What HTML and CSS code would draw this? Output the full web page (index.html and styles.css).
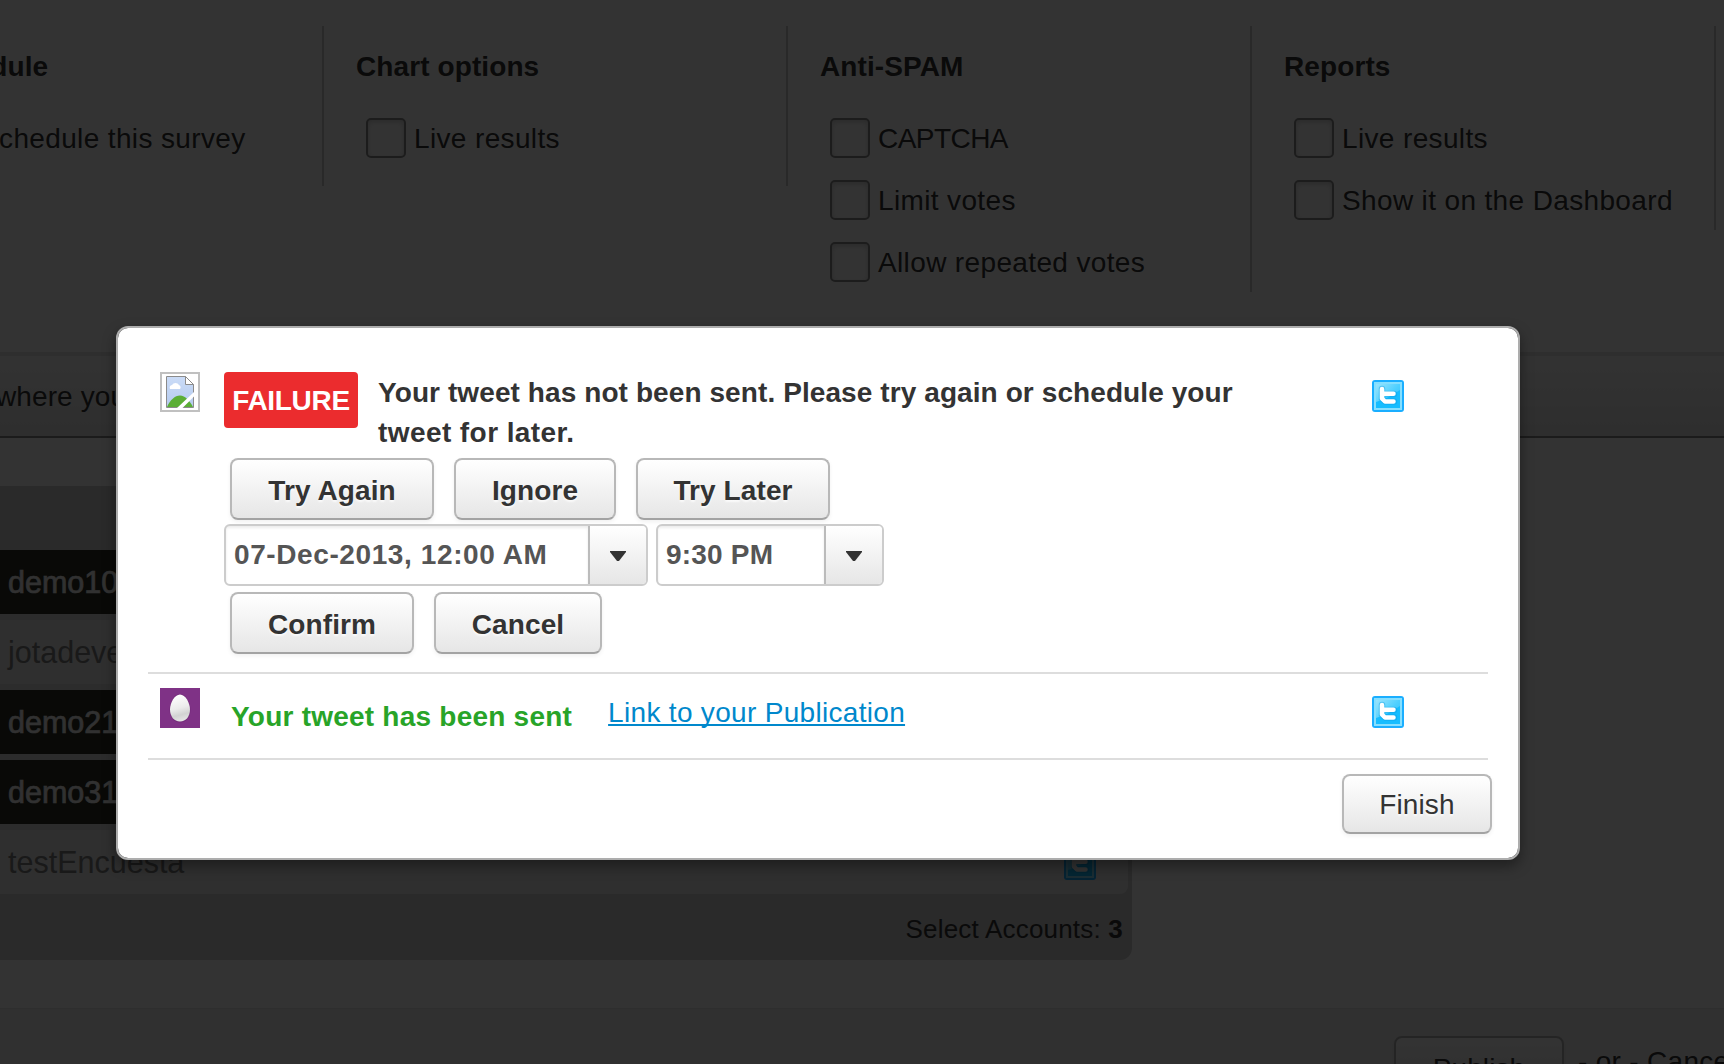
FILE: index.html
```html
<!DOCTYPE html>
<html lang="en">
<head>
<meta charset="utf-8">
<title>Publish survey</title>
<link rel="stylesheet" href="styles.css">
</head>
<body>
<svg class="defs" width="0" height="0" aria-hidden="true">
  <defs>
    <linearGradient id="tw-bg" x1="0" y1="0" x2="1" y2="1">
      <stop offset="0" stop-color="#a5e7fd"/><stop offset=".5" stop-color="#4fd0ff"/><stop offset="1" stop-color="#1cb8ff"/>
    </linearGradient>
    <symbol id="twitter" viewBox="0 0 32 32">
      <rect width="32" height="32" rx="3" fill="#1aaeff"/>
      <rect x="2" y="2" width="28" height="28" fill="url(#tw-bg)"/>
      <path d="M4 22C12 20 20 15 28 10V28H4z" fill="#16bdff"/>
      <rect x="3" y="3" width="26" height="26" fill="none" stroke="#85dfff" stroke-width="2"/>
      <path d="M10 9V18.500L13.500 21.500H22M10 14H22" fill="none" stroke="#0a9be0" stroke-opacity=".4" stroke-width="6.500" stroke-linecap="round"/>
      <path d="M10 9V18.500L13 21.500H21.500M10 13.800H21.500" fill="none" stroke="#fff" stroke-width="4.500" stroke-linecap="round" stroke-linejoin="round"/>
    </symbol>
  </defs>
</svg>
<main class="page">
  <section class="options">
    <div class="option-group">
      <h2 class="group-title group-title-cut">Schedule</h2>
      <div class="check-row check-row-cut">Schedule this survey</div>
    </div>
    <div class="option-group">
      <h2 class="group-title">Chart options</h2>
      <div class="check-row"><span class="check"></span>Live results</div>
    </div>
    <div class="option-group">
      <h2 class="group-title">Anti-SPAM</h2>
      <div class="check-row"><span class="check"></span><span class="tight">CAPTCHA</span></div>
      <div class="check-row"><span class="check"></span>Limit votes</div>
      <div class="check-row"><span class="check"></span>Allow repeated votes</div>
    </div>
    <div class="option-group">
      <h2 class="group-title">Reports</h2>
      <div class="check-row"><span class="check"></span>Live results</div>
      <div class="check-row"><span class="check"></span>Show it on the Dashboard</div>
    </div>
  </section>
  <div class="section-bar"><span class="section-text">where you want</span></div>
  <section class="accounts">
    <div class="account-list">
      <div class="account selected">demo10</div>
      <div class="account">jotadeveloper</div>
      <div class="account selected">demo21</div>
      <div class="account selected">demo31</div>
      <div class="account">testEncuesta<svg class="tw"><use href="#twitter"/></svg></div>
    </div>
    <div class="account-total">Select Accounts:&nbsp;<b>3</b></div>
  </section>
  <footer class="page-footer">
    <span class="btn btn-publish">Publish</span>
    <span class="or-cancel">- or - Cancel</span>
  </footer>
</main>
<div class="overlay">
  <div class="modal">
    <div class="result">
      <svg class="avatar" viewBox="0 0 40 40">
        <rect x="1" y="1" width="38" height="38" fill="#fff" stroke="#c0c0c0" stroke-width="2"/>
        <linearGradient id="sky" x1="0" y1="0" x2="0" y2="1"><stop offset="0" stop-color="#cbdcf7"/><stop offset="1" stop-color="#b4caee"/></linearGradient>
        <path d="M6.500 4.500H25.500L33.500 12.500V35.500H6.500z" fill="url(#sky)"/>
        <path d="M7 35C10 28 15 23.500 20 23.500S30 29 33 35z" fill="#5bae35"/>
        <path d="M10 17a3 3 0 0 1 2-4a4 4 0 0 1 7 0a2.500 2.500 0 0 1 1 4z" fill="#fff"/>
        <path d="M6.500 4.500H25.500L33.500 12.500V35.500H6.500z" fill="none" stroke="#8b8b8b"/>
        <path d="M25.500 4.500V12.500H33.500z" fill="#fff" stroke="#8b8b8b"/>
        <path d="M17 36L34.500 19.500V24L22.500 36z" fill="#fff"/>
      </svg>
      <div class="result-body">
        <div class="message-line">
          <span class="failure">FAILURE</span>
          <p class="message">Your tweet has not been sent. Please try again or schedule your<br><span class="loose">tweet for later.</span></p>
        </div>
        <div class="buttons">
          <span class="btn b-again">Try Again</span><span class="btn b-ignore">Ignore</span><span class="btn b-later">Try Later</span>
        </div>
        <div class="combos">
          <div class="combo combo-date"><span class="combo-text">07-Dec-2013, 12:00 AM</span><span class="combo-arrow"><svg width="16" height="10" viewBox="0 0 16 10"><path d="M0 0H16V1L9 10H7L0 1z" fill="#333"/></svg></span></div>
          <div class="combo combo-time"><span class="combo-text">9:30 PM</span><span class="combo-arrow"><svg width="16" height="10" viewBox="0 0 16 10"><path d="M0 0H16V1L9 10H7L0 1z" fill="#333"/></svg></span></div>
        </div>
        <div class="buttons">
          <span class="btn b-confirm">Confirm</span><span class="btn b-cancel">Cancel</span>
        </div>
      </div>
      <svg class="tw"><use href="#twitter"/></svg>
    </div>
    <div class="result result-ok">
      <svg class="avatar" viewBox="0 0 40 40">
        <defs><linearGradient id="egg" x1=".4" y1="0" x2=".6" y2="1"><stop offset="0" stop-color="#fff"/><stop offset=".5" stop-color="#ebebeb"/><stop offset=".75" stop-color="#d2d2d2"/><stop offset="1" stop-color="#e6e6e6"/></linearGradient></defs>
        <rect width="40" height="40" fill="#7f3286"/>
        <path d="M20 6C26 6 30.500 15 30.500 22C30.500 29 26 34.500 20 34.500S9.500 29 9.500 22C9.500 15 14 6 20 6z" fill="#6a2671" opacity=".6"/>
        <path d="M20 6.500C25.500 6.500 30 15 30 21.500C30 28.500 26 33.500 20 33.500S10 28.500 10 21.500C10 15 14.500 6.500 20 6.500z" fill="url(#egg)"/>
      </svg>
      <span class="sent">Your tweet has been sent</span>
      <a class="link">Link to your Publication</a>
      <svg class="tw"><use href="#twitter"/></svg>
    </div>
    <div class="modal-footer"><span class="btn b-finish">Finish</span></div>
  </div>
</div>
</body>
</html>
```
FILE: styles.css
```css
* { box-sizing: border-box; }

body {
  margin: 0;
  width: 1724px;
  height: 1064px;
  overflow: hidden;
  background: #fff;
  color: #333;
  font: 28px/40px "Liberation Sans", Arial, sans-serif;
  white-space: nowrap;
}

.defs { position: absolute; }

.page {
  height: 1064px;
  display: flex;
  flex-direction: column;
  overflow: hidden;
}

/* Survey options */
.options {
  display: flex;
  align-items: flex-start;
  height: 352px;
  flex: none;
  padding-top: 26px;
  margin-left: -140px;
}

.option-group {
  flex: none;
  width: 464px;
  height: 160px;
  padding: 20px 0 0 32px;
  border-right: 2px solid #ccc;
}
.option-group:nth-child(3) { height: 266px; }
.option-group:nth-child(4) { height: 204px; }

.group-title {
  margin: 0 0 30px;
  font-size: 28px;
  line-height: 42px;
  letter-spacing: .1px;
}
.group-title-cut { margin-left: 31px; }

.check-row {
  display: flex;
  gap: 8px;
  height: 40px;
  margin: 0 0 22px 10px;
  line-height: 42px;
  letter-spacing: .36px;
}
.check-row-cut { margin-left: 88px; }
.tight { letter-spacing: -.55px; }

.check {
  width: 40px;
  height: 40px;
  border: 2px solid #8c8c8c;
  border-radius: 5px;
  box-shadow: inset 0 2px 5px rgba(0, 0, 0, .18);
}

.section-bar {
  flex: none;
  height: 86px;
  padding-top: 21px;
  border-top: 4px solid #e3e3e3;
  border-bottom: 2px solid #858585;
  background: linear-gradient(#fbfbfb, #e4e4e4);
}
.section-text { margin-left: -4px; letter-spacing: .1px; }

/* Accounts */
.accounts {
  flex: none;
  width: 1132px;
  height: 474px;
  margin-top: 48px;
  padding-top: 64px;
  background: #cfcfcf;
  border-radius: 0 0 12px 0;
}

.account-list {
  display: flex;
  flex-direction: column;
  gap: 6px;
  width: 1128px;
  background: #dadada;
  border-radius: 0 0 8px 0;
}

.account {
  display: flex;
  align-items: center;
  justify-content: space-between;
  height: 64px;
  padding: 0 32px 0 8px;
  background: #e9e9e9;
  color: #7d7d7d;
  font-size: 30.500px;
}
.account:last-child { border-radius: 0 0 8px 0; }
.account .tw { margin-top: 4px; }
.selected {
  background: #2f2f26;
  color: #f2f2f2;
  -webkit-text-stroke: .7px #f2f2f2;
}

.account-total {
  padding: 15px 9px 0 0;
  text-align: right;
  font-size: 26px;
  letter-spacing: .2px;
}

.page-footer {
  flex: none;
  display: flex;
  height: 120px;
  margin-top: 48px;
  padding: 28px 0 0 1394px;
  background: #efefef;
  border-top: 1px solid #e4e4e4;
}
.page-footer .btn-publish { width: 170px; margin-top: -1px; border-color: #b4b4b4; }
.or-cancel { margin: 5px 0 0 14px; letter-spacing: .3px; }

/* Dialog */
.overlay {
  position: absolute;
  inset: 0;
  background: rgba(0, 0, 0, .8);
  padding: 326px 0 0 116px;
}

.modal {
  width: 1404px;
  height: 534px;
  padding: 0 30px;
  background: #fff;
  background-clip: padding-box;
  border: 2px solid #adadad;
  border-radius: 12px;
  box-shadow: 0 6px 14px rgba(0, 0, 0, .4);
}

.result {
  display: flex;
  align-items: flex-start;
  height: 346px;
  padding: 44px 84px 0 12px;
  border-bottom: 2px solid #ddd;
}
.result-ok {
  height: 86px;
  padding-top: 14px;
}

.avatar {
  flex: none;
  width: 40px;
  height: 40px;
}
.tw {
  flex: none;
  width: 32px;
  height: 32px;
  margin: 8px 0 0 auto;
}

.result-body {
  margin-left: 24px;
  font-weight: bold;
}

.message-line {
  display: flex;
  align-items: flex-start;
  gap: 20px;
  height: 86px;
}

.failure {
  width: 134px;
  height: 56px;
  border-radius: 4px;
  background: #eb2c2e;
  color: #fff;
  line-height: 57px;
  letter-spacing: -.3px;
  text-align: center;
}

.message { margin: 1px 0 0; letter-spacing: .09px; }
.loose { letter-spacing: .42px; }

.btn {
  height: 62px;
  flex: none;
  border: 2px solid #b8b8b8;
  border-bottom-color: #a3a3a3;
  border-radius: 8px;
  background: linear-gradient(#fff, #e6e6e6);
  box-shadow: 0 2px 4px rgba(0, 0, 0, .06);
  line-height: 61px;
  letter-spacing: .1px;
  text-align: center;
  text-shadow: 0 2px 2px rgba(255, 255, 255, .75);
}

.buttons {
  display: flex;
  gap: 20px;
  margin-left: 6px;
}
.b-again { width: 204px; }
.b-ignore { width: 162px; }
.b-later { width: 194px; }
.b-confirm { width: 184px; }
.b-cancel { width: 168px; }

.combos {
  display: flex;
  gap: 8px;
  margin: 4px 0 6px;
}

.combo {
  display: flex;
  height: 62px;
  border: 2px solid #ccc;
  border-radius: 6px;
  overflow: hidden;
}
.combo-date { width: 424px; letter-spacing: .6px; }
.combo-time { width: 228px; letter-spacing: .2px; }

.combo-text {
  flex: 1;
  padding-left: 8px;
  color: #555;
  line-height: 57px;
  box-shadow: inset 0 2px 3px rgba(0, 0, 0, .08);
}

.combo-arrow {
  display: flex;
  justify-content: center;
  align-items: center;
  width: 58px;
  padding-top: 2px;
  border-left: 2px solid #bbb;
  background: linear-gradient(#fff, #e6e6e6);
}

.sent {
  margin: 9px 0 0 31px;
  color: #28a428;
  font-weight: bold;
  letter-spacing: .23px;
}
.link {
  margin: 5px 0 0 36px;
  color: #08c;
  letter-spacing: .31px;
  text-decoration: underline 2px;
  text-underline-offset: 2px;
  text-decoration-skip-ink: none;
}

.modal-footer {
  display: flex;
  justify-content: flex-end;
  padding-top: 14px;
  margin-right: -4px;
}
.b-finish {
  width: 150px;
  height: 60px;
  line-height: 57px;
}
```
